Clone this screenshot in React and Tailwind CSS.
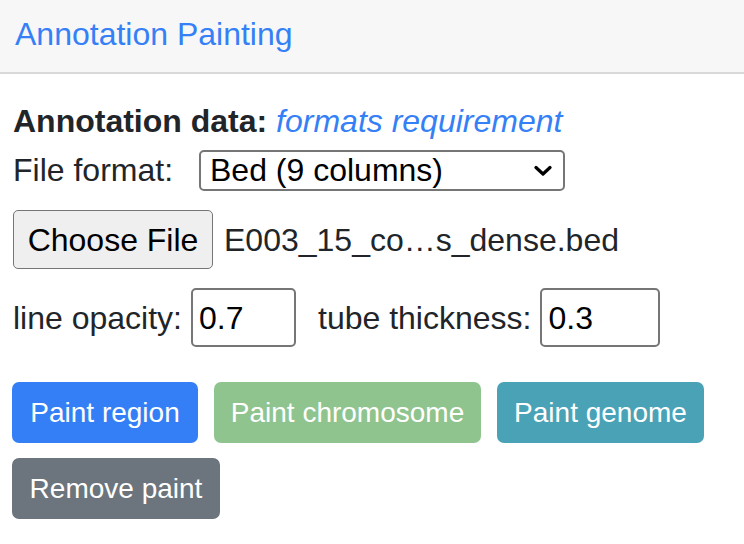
export default function App() {
  return (
    <div className="w-[744px] h-[544px] bg-white overflow-hidden text-[#212529]" style={{ fontFamily: '"Liberation Sans", Arial, sans-serif' }}>
      <div className="h-[74px] bg-[#f7f7f7] border-b-2 border-[#d9d9d9] flex items-center pl-[15px] pb-[4px]">
        <span className="text-[32px] leading-none text-[#3580f6]">Annotation Painting</span>
      </div>
      <div className="pl-[13px] pt-[23px]">
        <div className="text-[32px] leading-[48px]">
          <span className="font-bold">Annotation data: </span>
          <a className="italic text-[#3580f6]">formats requirement</a>
        </div>
        <div className="flex items-center h-[40px] mt-[5px]">
          <span className="text-[32px] leading-none w-[186px]">File format:</span>
          <div className="relative w-[366px] h-[41px] border-2 border-[#767676] rounded-[5px] flex items-center pl-[9px]">
            <span className="text-[32px] leading-none text-black">Bed (9 columns)</span>
            <svg className="absolute right-[11px] top-[13px]" width="18" height="12" viewBox="0 0 18 12">
              <path d="M2 2.5 L9 9 L16 2.5" fill="none" stroke="#000" strokeWidth="3.2" strokeLinecap="round" strokeLinejoin="round" />
            </svg>
          </div>
        </div>
        <div className="flex items-center mt-[20px] h-[59px]">
          <div className="w-[200px] h-[59px] bg-[#efefef] border border-[#767676] rounded-[5px] flex items-center justify-center">
            <span className="text-[32px] leading-none text-black">Choose File</span>
          </div>
          <span className="text-[32px] leading-none ml-[11px]">E003_15_co…s_dense.bed</span>
        </div>
        <div className="flex items-center mt-[19px] h-[59px]">
          <span className="text-[32px] leading-none">line opacity:</span>
          <div className="ml-[9px] w-[105px] h-[59px] border-2 border-[#767676] rounded-[5px] flex items-center pl-[6px]">
            <span className="text-[32px] leading-none text-black">0.7</span>
          </div>
          <span className="text-[32px] leading-none ml-[22px]">tube thickness:</span>
          <div className="ml-[9px] w-[120px] h-[59px] border-2 border-[#767676] rounded-[5px] flex items-center pl-[6px]">
            <span className="text-[32px] leading-none text-black">0.3</span>
          </div>
        </div>
        <div className="flex gap-[16px] mt-[35px] -ml-[1px]">
          <div className="h-[61px] w-[186px] bg-[#357ff6] rounded-[7px] flex items-center justify-center text-white text-[28px] leading-none">Paint region</div>
          <div className="h-[61px] w-[267px] bg-[#8fc48e] rounded-[7px] flex items-center justify-center text-white text-[28px] leading-none">Paint chromosome</div>
          <div className="h-[61px] w-[207px] bg-[#4aa2b7] rounded-[7px] flex items-center justify-center text-white text-[28px] leading-none">Paint genome</div>
        </div>
        <div className="flex mt-[15px] -ml-[1px]">
          <div className="h-[61px] w-[208px] bg-[#6c757d] rounded-[7px] flex items-center justify-center text-white text-[28px] leading-none">Remove paint</div>
        </div>
      </div>
    </div>
  );
}
